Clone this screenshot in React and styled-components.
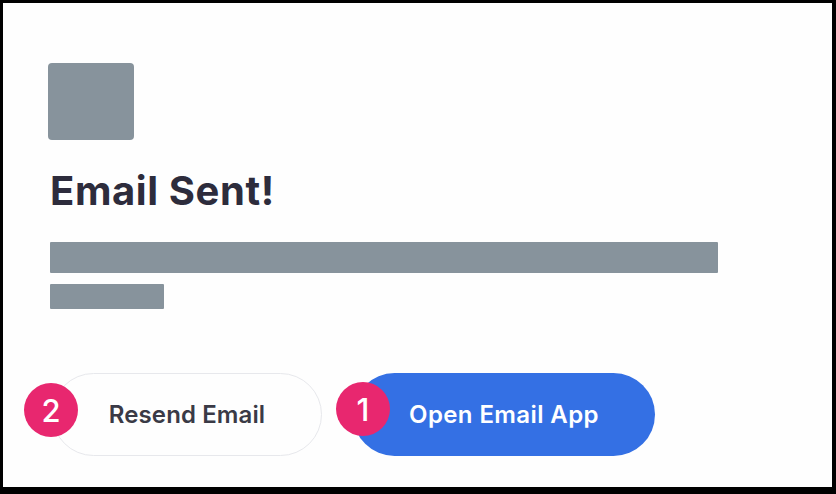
import React from 'react';
import styled, { createGlobalStyle } from 'styled-components';

const GlobalStyle = createGlobalStyle`
    html, body {
        margin: 0;
        padding: 0;
        background: #000;
    }
    body {
        font-family: Inter, "Noto Sans", sans-serif;
    }
`;

const Frame = styled.div`
    box-sizing: border-box;
    width: 836px;
    height: 494px;
    padding: 3px 4px 7px 3px;
    background: #000;
`;

const Panel = styled.div`
    box-sizing: border-box;
    height: 100%;
    background: #fefefe;
    padding: 60px 0 0 45px;
    display: flex;
    flex-direction: column;
`;

const IconBox = styled.div`
    width: 86px;
    height: 77px;
    border-radius: 4px;
    background: #87939c;
`;

const Title = styled.h1`
    margin: 27px 0 0 2px;
    font-size: 40px;
    font-weight: 650;
    line-height: 48px;
    color: #2d2c3c;
    letter-spacing: 0.6px;
`;

const Line = styled.div`
    margin: ${({ top }) => top}px 0 0 2px;
    width: ${({ w }) => w}px;
    height: ${({ h }) => h}px;
    background: #87939c;
    border-radius: 1px;
`;

const Actions = styled.div`
    display: flex;
    gap: 31px;
    margin: 64px 0 0 4px;
`;

const Button = styled.button`
    position: relative;
    box-sizing: border-box;
    width: ${({ w }) => w}px;
    height: 83px;
    border-radius: 42px;
    font-family: Inter, "Noto Sans", sans-serif;
    font-size: 24px;
    font-weight: 600;
    letter-spacing: ${({ primary }) => (primary ? '0.4px' : '0.1px')};
    cursor: pointer;
    border: ${({ primary }) => (primary ? 'none' : '1.5px solid #e7e8ec')};
    background: ${({ primary }) => (primary ? '#3470e4' : '#fefefe')};
    color: ${({ primary }) => (primary ? '#fff' : '#3a3a46')};
    padding: 0;
`;

const Badge = styled.span`
    position: absolute;
    top: 9px;
    left: ${({ left }) => left}px;
    width: 54px;
    height: 54px;
    border-radius: 50%;
    background: #e8276f;
    color: #fff;
    font-family: Inter, "Noto Sans", sans-serif;
    font-size: 31px;
    font-weight: 500;
    letter-spacing: 0;
    display: flex;
    align-items: center;
    justify-content: center;
`;

export default function App() {
    return (
        <>
            <GlobalStyle />
            <Frame>
                <Panel>
                    <IconBox />
                    <Title>Email Sent!</Title>
                    <Line top={27} w={668} h={31} />
                    <Line top={11} w={114} h={25} />
                    <Actions>
                        <Button w={270}>
                            <Badge left={-29}>2</Badge>
                            Resend Email
                        </Button>
                        <Button primary w={302}>
                            <Badge left={-17}>1</Badge>
                            Open Email App
                        </Button>
                    </Actions>
                </Panel>
            </Frame>
        </>
    );
}
